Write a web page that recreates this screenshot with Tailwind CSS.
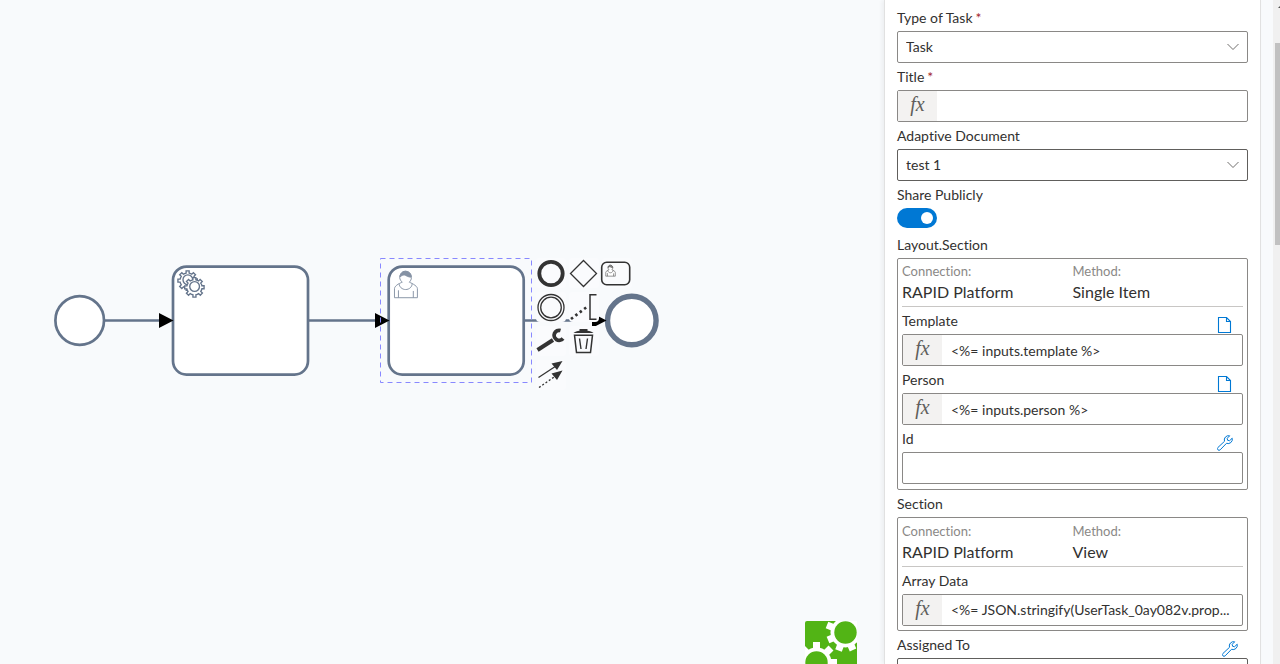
<!DOCTYPE html>
<html lang="en">
<head>
<meta charset="utf-8">
<title>Process designer</title>
<script src="https://cdn.jsdelivr.net/npm/@tailwindcss/browser@4"></script>
</head>
<body class="flex h-screen overflow-hidden bg-[#f8fafc] font-[Lato,sans-serif] text-sm text-[#323130] [font-variant-ligatures:none]">

<svg class="hidden">
  <symbol id="chevron" viewBox="0 0 14 14"><path d="M1.500 4 7 9.500 12.500 4" fill="none" stroke="#605e5c" stroke-width=".9"/></symbol>
  <symbol id="doc" viewBox="0 0 16 16"><path d="M1.500.500h8l4 4v11h-12zM9.500.500v4h4" fill="none" stroke="#0078d4" stroke-width="1.100"/></symbol>
  <symbol id="wrench" viewBox="0 0 16 16"><path d="M15.200 3.200a4.300 4.300 0 0 1-5.700 5.100l-6.300 6.500a1.600 1.600 0 0 1-2.300-2.300L7.500 6.300A4.300 4.300 0 0 1 12.700.8L10.200 3.300l.4 2 2 .4z" fill="none" stroke="#0078d4" stroke-linejoin="round"/></symbol>
  <symbol id="gear" viewBox="0 0 24 24" overflow="visible"><path d="m 12,18 v -1.71335 c 0.352326,-0.0705 0.703932,-0.17838 1.047628,-0.32133 0.344416,-0.14465 0.665822,-0.32133 0.966377,-0.52145 l 1.19431,1.18005 1.567487,-1.57688 -1.195028,-1.18014 c 0.403376,-0.61394 0.683079,-1.29908 0.825447,-2.01824 l 1.622133,-0.01 v -2.2196 l -1.636514,0.01 c -0.07333,-0.35153 -0.178319,-0.70024 -0.323564,-1.04372 -0.145244,-0.34406 -0.321407,-0.6644 -0.522735,-0.96217 l 1.131035,-1.13631 -1.583305,-1.56293 -1.129598,1.13589 c -0.614052,-0.40108 -1.302883,-0.68093 -2.022633,-0.82247 l 0.0093,-1.61852 h -2.241173 l 0.0042,1.63124 c -0.353763,0.0736 -0.705369,0.17977 -1.049785,0.32371 -0.344415,0.14437 -0.665102,0.32092 -0.9635006,0.52006 l -1.1698628,-1.15823 -1.5667691,1.5792 1.1684265,1.15669 c -0.4026573,0.61283 -0.68308,1.29797 -0.8247287,2.01713 l -1.6588041,0.003 v 2.22174 l 1.6724648,-0.006 c 0.073327,0.35077 0.1797598,0.70243 0.3242851,1.04472 0.1452428,0.34448 0.3214064,0.6644 0.5227339,0.96066 l -1.1993431,1.19723 1.5840256,1.56011 1.1964668,-1.19348 c 0.6140517,0.40346 1.3028827,0.68232 2.0233517,0.82331 l 7.19e-4,1.69892 z" fill="#fff" stroke="#64748b"/><circle cx="11" cy="10.200" r="3.600" fill="#fff" stroke="#64748b"/></symbol>
  <symbol id="user" viewBox="0 0 24 24" overflow="visible">
    <path d="m 15,12 c 0.909,-0.845 1.594,-2.049 1.594,-3.385 0,-2.554 -1.805,-4.622 -4.357,-4.622 -2.552,0 -4.288,2.068 -4.288,4.622 0,1.348 0.974,2.562 1.896,3.405 -0.529,0.187 -5.669,2.097 -5.794,4.756 v 6.718 h 17 v -6.718 c 0,-2.298 -5.528,-4.595 -6.051,-4.776 z m -8,6 l 0,5.500 m 11,0 l 0,-5" fill="#fff"/>
    <path d="m 17.162,13.009 c 0,2.447 -2.158,4.431 -4.821,4.431 -2.665,0 -4.822,-1.981 -4.822,-4.431" fill="none"/>
    <path d="m 8.100,8.200 c 0,0 2.251,-2.358 4.274,-1.177 2.024,1.181 4.221,1.537 4.124,0.965 -0.098,-0.570 -0.117,-3.791 -4.191,-4.136 -3.575,0.001 -4.208,3.367 -4.208,4.348 z" fill="currentColor"/>
  </symbol>
</svg>

<main class="relative min-w-0 flex-1 overflow-hidden">
  <svg class="absolute left-0 top-0 h-[664px] w-[884px]" viewBox="0 0 884 664" fill="none" aria-label="Process diagram">
    <g stroke="#64748b" stroke-width="2.700">
      <path d="M105 320.500h54M308 320.500h68M524 320.500h74"/>
      <circle cx="79.700" cy="320.500" r="24.300" fill="#fff"/>
      <rect x="173" y="266.600" width="135" height="108" rx="13.500" fill="#fff"/>
      <rect x="388.700" y="266.600" width="135" height="108" rx="13.500" fill="#fff"/>
      <circle cx="631.800" cy="320.500" r="24.300" stroke-width="5.400" fill="#fff"/>
    </g>
    <path d="M159 313v15l14.500-7.500zM375 313v15l14.500-7.500zM592 313v15l14.500-7.500z" fill="#000"/>
    <g transform="translate(173 266) scale(1.350)">
      <use href="#gear" width="24" height="24"/>
      <use href="#gear" x="5" y="5" width="24" height="24"/>
    </g>
    <g transform="translate(389 266) scale(1.350)" color="#8592a4" stroke="#8592a4" stroke-width=".700"><use href="#user" width="24" height="24"/></g>
    <rect x="380.500" y="258.500" width="151" height="124" stroke="#8888ff" stroke-dasharray="5 4"/>
  </svg>

  <div class="absolute left-[536px] top-[258px] grid grid-cols-[30px_30px_30px] gap-x-[3px] gap-y-1 text-[#333]">
    <button aria-label="Append end event" class="size-[30px] rounded bg-[#fafbfd]"><svg viewBox="0 0 30 30" fill="none" stroke="currentColor"><circle cx="15" cy="15.500" r="11.700" stroke-width="3.800"/></svg></button>
    <button aria-label="Append gateway" class="size-[30px] rounded bg-[#fafbfd]"><svg viewBox="0 0 30 30" fill="none" stroke="currentColor"><path d="M14.500 2.500 27.500 15.500l-13 13-13-13z" stroke-width="1.300"/></svg></button>
    <button aria-label="Append user task" class="size-[30px] rounded bg-[#fafbfd]"><svg viewBox="0 0 30 30" overflow="visible" fill="none" stroke="currentColor"><rect x="-.3" y="4.300" width="28" height="22.400" rx="5" stroke-width="1.600"/><g transform="translate(1.500 5) scale(.56)" color="#888" stroke="#555" stroke-width="1.100"><use href="#user" width="24" height="24"/></g></svg></button>
    <button aria-label="Append intermediate event" class="size-[30px] rounded bg-[#fafbfd]"><svg viewBox="0 0 30 30" fill="none" stroke="currentColor" stroke-width="1.300"><circle cx="15" cy="15.500" r="13"/><circle cx="15" cy="15.500" r="10.300"/></svg></button>
    <button aria-label="Add text annotation" class="size-[30px] rounded bg-[#fafbfd]"><svg viewBox="0 0 30 30" fill="none" stroke="currentColor"><path d="M27.500 2.700h-6.500v24.600h6.500" stroke-width="1.500"/><path d="M2 27 18.500 14.500" stroke-width="2.700" stroke-dasharray="2.500 3"/></svg></button>
    <span></span>
    <button aria-label="Change type" class="size-[30px] rounded bg-[#fafbfd]"><svg viewBox="0 0 30 30" fill="none" stroke="currentColor"><path d="M1.500 24 17 14" stroke-width="4"/><path d="M27 12.500a5 5 0 1 1-2.500-8" stroke-width="3.800"/></svg></button>
    <button aria-label="Delete" class="size-[30px] rounded bg-[#fafbfd]"><svg viewBox="0 0 30 30" fill="none" stroke="currentColor"><path d="M5.500 9.200h18l-2 17.300h-14z" stroke-width="1.500"/><path d="M10.500 12.500l1.500 10.500M18.500 12.500 17 23" stroke-width="1.400"/><path d="M4.500 6.900c1-1.200 4-1.800 6-2.200V3h8v1.700c2 .4 5 1 6 2.200z" fill="currentColor" stroke="none"/></svg></button>
    <span></span>
    <button aria-label="Connect" class="size-[30px] rounded bg-[#fafbfd]"><svg viewBox="0 0 30 30" fill="none" stroke="currentColor" stroke-width="1.300"><path d="M2.500 17.500 20 6"/><path d="M3 27.500 21 15" stroke-dasharray="2 2"/><path d="M26.500 1 21 10l-5.500-6.500zM26.500 10.500 21 20l-5.500-6.500z" fill="currentColor" stroke="none"/></svg></button>
  </div>

  <svg class="absolute left-[805px] top-[621px] size-[52px]" viewBox="0 0 52 52" aria-label="Logo">
    <rect width="52" height="52" rx="2" fill="#52b415"/>
    <g stroke="#fff" stroke-width="7" fill="none">
      <path d="M40.500 11.500 22 4M40.500 11.500 23 19M40.500 11.500 33.500 29.500M40.500 11.500 48 29"/>
      <path d="M11.500 41.500v-20.500M11.500 41.500 26 27M11.500 41.500-3 27M11.500 41.500H32"/>
    </g>
    <g fill="#fff">
      <circle cx="40.500" cy="11.500" r="15"/>
      <circle cx="11.500" cy="41.500" r="15"/>
      <path d="M34 0h18v18H40z"/>
    </g>
    <g fill="#52b415">
      <circle cx="40.500" cy="11.500" r="11.200"/>
      <circle cx="11.500" cy="41.500" r="11.200"/>
    </g>
  </svg>
</main>

<aside class="mr-3 w-[377px] shrink-0 overflow-hidden border-x border-[#e1e1e1] bg-white px-3 pt-1 shadow-[-2px_0_4px_rgba(0,0,0,0.05)]">
  <form>
    <label for="type" class="block leading-[27px]">Type of Task<span class="pl-[3px] text-[#a4262c]">*</span></label>
    <div class="relative">
      <select id="type" class="h-8 w-full appearance-none rounded-xs border border-[#8a8886] bg-white px-2"><option>Task</option></select>
      <svg class="pointer-events-none absolute right-2 top-[9px] size-3.5"><use href="#chevron"/></svg>
    </div>

    <label for="title" class="block leading-[27px]">Title<span class="pl-[3px] text-[#a4262c]">*</span></label>
    <div class="flex h-8 rounded-xs border border-[#8a8886]">
      <span class="flex w-[39px] items-center justify-center bg-[#f3f2f1] pb-1 font-['Liberation_Serif',serif] text-xl italic text-[#605e5c]">fx</span>
      <input id="title" class="min-w-0 flex-1 px-2 outline-none">
    </div>

    <label for="document" class="block leading-[27px]">Adaptive Document</label>
    <div class="relative">
      <select id="document" class="h-8 w-full appearance-none rounded-xs border border-[#605e5c] bg-white px-2"><option>test 1</option></select>
      <svg class="pointer-events-none absolute right-2 top-[9px] size-3.5"><use href="#chevron"/></svg>
    </div>

    <label for="share" class="block leading-[27px]">Share Publicly</label>
    <input id="share" type="checkbox" role="switch" checked class="mb-[3px] flex h-5 w-10 appearance-none items-center justify-end rounded-full bg-[#0078d4] pr-1 before:size-3 before:rounded-full before:bg-white">

    <h3 class="leading-[27px]">Layout.Section</h3>
    <section class="rounded-xs border border-[#8a8886] px-1 pb-[5px]">
      <dl class="grid grid-cols-2 border-b border-[#c8c6c4] pb-[3px] pt-[2px]">
        <div><dt class="text-[13px] leading-5 text-[#8a8886]">Connection:</dt><dd class="text-base leading-[22px]">RAPID Platform</dd></div>
        <div><dt class="text-[13px] leading-5 text-[#8a8886]">Method:</dt><dd class="text-base leading-[22px]">Single Item</dd></div>
      </dl>
      <div class="flex items-end justify-between"><label for="template" class="leading-[27px]">Template</label><button type="button" aria-label="Template source" class="mb-px mr-[10px] size-4"><svg class="size-4"><use href="#doc"/></svg></button></div>
      <div class="flex h-8 rounded-xs border border-[#8a8886]">
        <span class="flex w-[39px] items-center justify-center bg-[#f3f2f1] pb-1 font-['Liberation_Serif',serif] text-xl italic text-[#605e5c]">fx</span>
        <input id="template" class="min-w-0 flex-1 px-[9px] pt-px outline-none" value="&lt;%= inputs.template %&gt;">
      </div>
      <div class="flex items-end justify-between"><label for="person" class="leading-[27px]">Person</label><button type="button" aria-label="Person source" class="mb-px mr-[10px] size-4"><svg class="size-4"><use href="#doc"/></svg></button></div>
      <div class="flex h-8 rounded-xs border border-[#8a8886]">
        <span class="flex w-[39px] items-center justify-center bg-[#f3f2f1] pb-1 font-['Liberation_Serif',serif] text-xl italic text-[#605e5c]">fx</span>
        <input id="person" class="min-w-0 flex-1 px-[9px] pt-px outline-none" value="&lt;%= inputs.person %&gt;">
      </div>
      <div class="flex items-end justify-between"><label for="id" class="leading-[27px]">Id</label><button type="button" aria-label="Id source" class="mb-px mr-[10px] size-4"><svg class="size-4"><use href="#wrench"/></svg></button></div>
      <input id="id" class="block h-8 w-full rounded-xs border border-[#8a8886] px-2">
    </section>

    <h3 class="leading-[27px]">Section</h3>
    <section class="rounded-xs border border-[#8a8886] px-1 pb-1">
      <dl class="grid grid-cols-2 border-b border-[#c8c6c4] py-[3px]">
        <div><dt class="text-[13px] leading-5 text-[#8a8886]">Connection:</dt><dd class="text-base leading-[22px]">RAPID Platform</dd></div>
        <div><dt class="text-[13px] leading-5 text-[#8a8886]">Method:</dt><dd class="text-base leading-[22px]">View</dd></div>
      </dl>
      <label for="array" class="block leading-[27px]">Array Data</label>
      <div class="flex h-8 rounded-xs border border-[#8a8886]">
        <span class="flex w-[39px] items-center justify-center bg-[#f3f2f1] pb-1 font-['Liberation_Serif',serif] text-xl italic text-[#605e5c]">fx</span>
        <input id="array" class="min-w-0 flex-1 px-[9px] outline-none" value="&lt;%= JSON.stringify(UserTask_0ay082v.prop...">
      </div>
    </section>

    <div class="flex items-end justify-between"><label for="assigned" class="leading-[27px]">Assigned To</label><button type="button" aria-label="Assigned To source" class="mb-px mr-[10px] size-4"><svg class="size-4"><use href="#wrench"/></svg></button></div>
    <input id="assigned" class="block h-8 w-full rounded-xs border border-[#605e5c] px-2">
  </form>
</aside>

<div class="w-[7px] shrink-0 overflow-hidden bg-[#f0f0f0] pl-0.5" aria-hidden="true">
  <svg class="mb-[35px] block h-2 w-[5px]" viewBox="0 0 5 8"><path d="M3 8l4-4v4z" fill="#505050"/></svg>
  <div class="h-[202px] w-full bg-[#c1c1c1]"></div>
</div>
</body>
</html>
